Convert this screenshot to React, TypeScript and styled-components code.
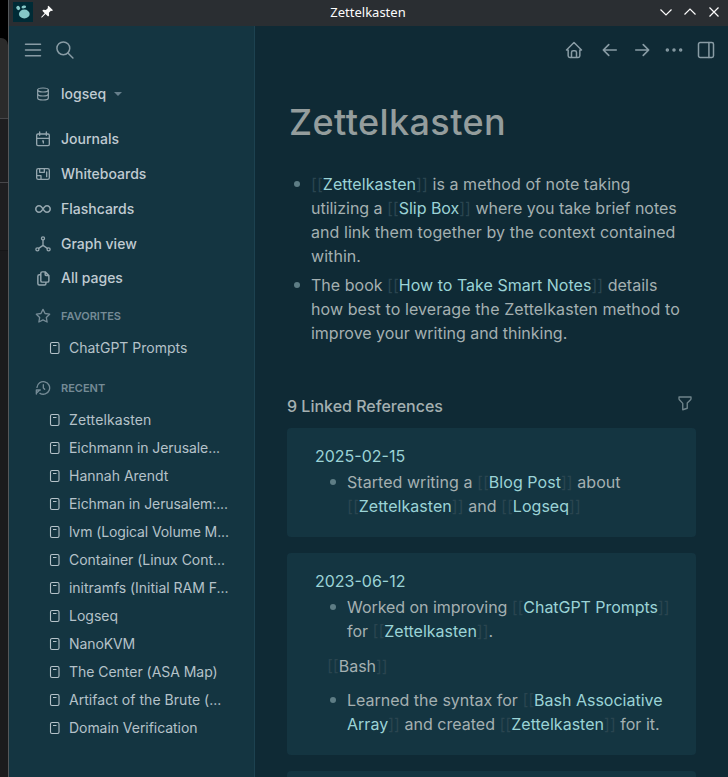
import React, { Fragment } from "react";
import styled, { createGlobalStyle, css } from "styled-components";

const GlobalStyle = createGlobalStyle`
  * { box-sizing: border-box; }
  body { margin: 0; background: #1b1b1d; overflow: hidden; }
  h1, h2, ul, p { margin: 0; padding: 0; font-weight: inherit; }
`;

const Screen = styled.div`
  display: flex;
  width: 728px;
  height: 777px;
  overflow: hidden;
  font-family: Inter, sans-serif;
`;

const Desktop = styled.div`
  display: flex;
  flex-direction: column;
  flex: none;
  width: 8px;
  background: #000;
`;

const DesktopTop = styled.div`
  height: 38px;
  background: #000;
`;

const OtherWindowBar = styled.div`
  height: 80px;
  border-top-right-radius: 7px;
  background: #2b2b2b;
`;

const OtherWindowPane = styled.div<{ $height: number; $plain?: boolean }>`
  height: ${(p) => p.$height}px;
  border-top: 1px solid #47474a;
  border-bottom: ${(p) => (p.$plain ? "1px solid #161618" : "none")};
  background: #1e1e20;
`;

const OtherWindowBody = styled.div`
  flex: 1;
  background: #1b1b1d;
`;

const Window = styled.div`
  display: flex;
  flex-direction: column;
  flex: 1;
  min-width: 0;
  border-left: 1px solid #54585b;
  background: #0f2a35;
`;

const TitleBar = styled.header`
  display: flex;
  align-items: center;
  flex: none;
  height: 26px;
  padding: 0 6px 0 4px;
  background: #2a2e32;
  color: #fcfcfc;
  svg { display: block; }
`;

const TitleSide = styled.div<{ $end?: boolean }>`
  display: flex;
  align-items: center;
  width: 120px;
  gap: ${(p) => (p.$end ? "8px" : "6px")};
  justify-content: ${(p) => (p.$end ? "flex-end" : "flex-start")};
  padding-bottom: 2px;
`;

const WindowTitle = styled.div`
  flex: 1;
  text-align: center;
  padding-left: 1px;
  font: 13px/24px "Noto Sans", sans-serif;
  padding-bottom: 3px;
`;

const Body = styled.div`
  display: flex;
  flex: 1;
  min-height: 0;
`;

const Sidebar = styled.aside`
  flex: none;
  width: 246px;
  border-right: 1px solid #1d4250;
  background: #143541;
  color: #c0cbd2;
  svg { display: block; flex: none; }
`;

const SidebarTools = styled.div`
  display: flex;
  align-items: center;
  gap: 12px;
  height: 48px;
  padding-left: 14px;
  color: #899ca5;
`;

const GraphName = styled.div`
  display: flex;
  align-items: center;
  height: 36px;
  margin-top: 1px;
  padding: 1px 0 0 26px;
  font-size: 14px;
  font-weight: 500;
  > svg:first-child { margin-right: 10px; color: #8fa1aa; }
  > svg:last-child { margin: 1px 0 0 8px; color: #667f8b; }
`;

const Nav = styled.nav`
  padding: 10px 0 3.9px;
`;

const NavItem = styled.a`
  display: flex;
  align-items: center;
  gap: 10px;
  height: 35px;
  padding-left: 26px;
  font-size: 14px;
  font-weight: 500;
  &:last-child { height: 33px; }
  svg { color: #94a6ae; }
`;

const SectionTitle = styled.h2`
  display: flex;
  align-items: center;
  gap: 10px;
  height: 36px;
  padding-left: 26px;
  color: #758b96;
  font-size: 11px;
  font-weight: 600;
`;

const PageList = styled.ul<{ $last?: boolean }>`
  list-style: none;
  padding-bottom: ${(p) => (p.$last ? "0" : "8px")};
`;

const PageItem = styled.li<{ $spacing?: number }>`
  display: flex;
  align-items: center;
  gap: 7px;
  height: 28px;
  padding-left: 39px;
  color: #b5c2c9;
  font-size: 14px;
  letter-spacing: ${(p) => p.$spacing ?? 0}px;
  white-space: nowrap;
`;

const Main = styled.main`
  flex: 1;
  min-width: 0;
  color: #a4b0b1;
  svg { display: block; flex: none; }
`;

const Toolbar = styled.div`
  display: flex;
  align-items: center;
  justify-content: flex-end;
  gap: 12px;
  height: 48px;
  padding-right: 12px;
  color: #899ca5;
  > svg:first-child { margin-right: 4px; }
`;

const Content = styled.div`
  padding: 26px 32px 0;
`;

const PageTitle = styled.h1`
  padding-left: 2px;
  font-size: 36px;
  font-weight: 500;
  line-height: 44px;
  letter-spacing: 0.4px;
  color: #949d9d;
`;

const Blocks = styled.ul`
  list-style: none;
  padding: 28px 0 0 0;
`;

const Block = styled.li<{ $inset?: boolean }>`
  display: flex;
  align-items: flex-start;
  padding-bottom: 5px;
  padding-left: ${(p) => (p.$inset ? "15px" : "7px")};
  font-size: 16px;
  line-height: 24px;
  white-space: pre;
`;

const Bullet = styled.span`
  flex: none;
  width: 6px;
  height: 6px;
  margin: 9px 11px 0 0;
  border-radius: 50%;
  background: #5e7d85;
`;

const Line = styled.div<{ $spacing: number }>`
  letter-spacing: ${(p) => p.$spacing}px;
`;

const linkColor = css`
  color: #9bd3d6;
`;

const PageLink = styled.a`
  ${linkColor}
`;

const Bracket = styled.span`
  color: #2a4550;
`;

const RefHeader = styled.div`
  display: flex;
  align-items: center;
  justify-content: space-between;
  height: 24px;
  margin-top: 44px;
  padding-right: 2px;
  font-size: 16px;
  font-weight: 500;
  svg { color: #6f848b; margin-bottom: 7px; }
`;

const RefCard = styled.section`
  min-height: 40px;
  margin-top: 10px;
  padding: 16px 28px 14px;
  border-radius: 4px;
  background: #143541;
  & + & { margin-top: 16px; }
`;

const RefDate = styled.h2`
  ${linkColor}
  font-size: 16px;
  line-height: 24px;
  padding-bottom: 2px;
`;

const Crumb = styled.p`
  padding: 6px 0 10px 12px;
  font-size: 16px;
  line-height: 24px;
`;

type IconProps = { size?: number; width?: number; children: React.ReactNode };
const Icon = ({ size = 20, width = 1.8, children }: IconProps) => (
  <svg width={size} height={size} viewBox="0 0 24 24" fill="none" stroke="currentColor"
    strokeWidth={width} strokeLinecap="round" strokeLinejoin="round">{children}</svg>
);

const AppLogo = () => (
  <svg width="20" height="20" viewBox="0 0 20 20">
    <rect width="20" height="20" fill="#002b36" />
    <g fill="#86c8c8">
      <ellipse cx="11.3" cy="12" rx="5.4" ry="4.4" />
      <ellipse cx="5.2" cy="6" rx="1.8" ry="2.2" transform="rotate(-35 5.2 6)" />
      <ellipse cx="10.8" cy="4.9" rx="2.3" ry="1.4" transform="rotate(-12 10.8 4.9)" />
    </g>
  </svg>
);

const PinIcon = () => (
  <svg width="16" height="16" viewBox="0 0 16 16" fill="#fcfcfc">
    <path d="M9.500 2 14 6.500 12.900 7.300 11.900 7 9.900 9.100 10.100 11.700 9.100 12.700 6.500 10.300 3 13.700 2.200 13.900 2.400 13.100 5.700 9.500 3.300 7 4.300 6 6.900 6.200 9 4.200 8.600 3.100Z" transform="translate(0 -.3)" />
  </svg>
);

const WindowControl = ({ d }: { d: string }) => (
  <svg width="16" height="16" viewBox="0 0 16 16" fill="none" stroke="#fcfcfc" strokeWidth="1.2"><path d={d} /></svg>
);

const PageIcon = () => (
  <svg width="14" height="14" viewBox="0 0 14 14" fill="none" stroke="currentColor">
    <rect x="2.500" y="1.500" width="8.500" height="11" rx="1.500" strokeWidth="1.1" />
    <path d="M5 4.500h3.500" />
  </svg>
);

const navItems: { label: string; icon: React.ReactNode }[] = [
  { label: "Journals", icon: <><rect x="2.500" y="4.500" width="19" height="17.500" rx="2" /><path d="M17 1.500v5M7 1.500v5M2.500 11h19M11.500 15h1v3" /></> },
  { label: "Whiteboards", icon: <><rect x="2.500" y="4" width="19" height="16" rx="2.500" /><path d="M2.500 14.500h6.500v5.500M7 4v5.500h7v-5.500M17.500 9v7" /></> },
  { label: "Flashcards", icon: <path d="M9.828 9.172a4 4 0 1 0 0 5.656 10 10 0 0 0 2.172-2.828 10 10 0 0 1 2.172-2.828 4 4 0 1 1 0 5.656 10 10 0 0 1-2.172-2.828 10 10 0 0 0-2.172-2.828" transform="translate(-2.400 -2.400) scale(1.200)" /> },
  { label: "Graph view", icon: <><circle cx="12" cy="3.500" r="2.300" /><circle cx="3.600" cy="20" r="2.300" /><circle cx="20.400" cy="20" r="2.300" /><path d="M12 6v8M5.500 18.500l6.500-4.500 6.500 4.500" /></> },
  { label: "All pages", icon: <path transform="translate(-1.200 -.5) scale(1.100)" d="M15 3v4a1 1 0 0 0 1 1h4M18 17h-7a2 2 0 0 1-2-2v-10a2 2 0 0 1 2-2h4l5 5v7a2 2 0 0 1-2 2zM16 17v2a2 2 0 0 1-2 2h-7a2 2 0 0 1-2-2v-10a2 2 0 0 1 2-2h2" /> },
];

const recents: [string, number][] = [
  ["Zettelkasten", 0.12], ["Eichmann in Jerusale...", -0.08], ["Hannah Arendt", 0], ["Eichman in Jerusalem:...", -0.08],
  ["lvm (Logical Volume M...", -0.1], ["Container (Linux Cont...", -0.02], ["initramfs (Initial RAM F...", -0.02], ["Logseq", 0],
  ["NanoKVM", -0.1], ["The Center (ASA Map)", -0.03], ["Artifact of the Brute (...", 0.04], ["Domain Verification", -0.05],
];

type TextLine = [text: string, spacing?: number];

/* Renders text in which [[name]] marks a page reference; brackets may stay open across lines. */
const Rich = ({ text }: { text: string }) => {
  let inside = text.includes("]]") && (!text.includes("[[") || text.indexOf("]]") < text.indexOf("[["));
  return (
    <>
      {text.split(/(\[\[|\]\])/).map((part, i) => {
        if (part === "[[" || part === "]]") {
          inside = part === "[[";
          return <Bracket key={i}>{part}</Bracket>;
        }
        return inside ? <PageLink key={i}>{part}</PageLink> : <Fragment key={i}>{part}</Fragment>;
      })}
    </>
  );
};

const BlockItem = ({ lines, inset }: { lines: TextLine[]; inset?: boolean }) => (
  <Block $inset={inset}>
    <Bullet />
    <div>{lines.map(([text, spacing = 0]) => <Line key={text} $spacing={spacing}><Rich text={text} /></Line>)}</div>
  </Block>
);

export default function App() {
  return (
    <Screen>
      <GlobalStyle />
      <Desktop>
        <DesktopTop />
        <OtherWindowBar />
        <OtherWindowPane $height={64} />
        <OtherWindowPane $height={69} $plain />
        <OtherWindowBody />
      </Desktop>
      <Window>
        <TitleBar>
          <TitleSide><AppLogo /><PinIcon /></TitleSide>
          <WindowTitle>Zettelkasten</WindowTitle>
          <TitleSide $end>
            <WindowControl d="M2.500 5.500 8 11l5.500-5.500" />
            <WindowControl d="M2.500 10.500 8 5l5.500 5.500" />
            <WindowControl d="M3.500 3.500l9 9M12.500 3.500l-9 9" />
          </TitleSide>
        </TitleBar>
        <Body>
          <Sidebar>
            <SidebarTools>
              <Icon><path d="M3 5h18M3 12h18M3 19h18" /></Icon>
              <Icon><circle cx="10" cy="10" r="7.700" /><path d="M21.500 21.500l-6-6" /></Icon>
            </SidebarTools>
            <GraphName>
              <Icon size={16}><ellipse cx="12" cy="6" rx="8" ry="3" /><path d="M4 6v6c0 1.657 3.582 3 8 3s8-1.343 8-3V6" /><path d="M4 12v6c0 1.657 3.582 3 8 3s8-1.343 8-3v-6" /></Icon>
              logseq
              <svg width="8" height="4" viewBox="0 0 8 4" fill="currentColor"><path d="M0 0h8L4 4z" /></svg>
            </GraphName>
            <Nav>
              {navItems.map((n) => <NavItem key={n.label}><Icon size={16} width={2}>{n.icon}</Icon>{n.label}</NavItem>)}
            </Nav>
            <SectionTitle><Icon size={16} width={2}><path d="M12 17.750l-6.172 3.245 1.179-6.873-5-4.867 6.900-1 3.086-6.253 3.086 6.253 6.900 1-5 4.867 1.179 6.873z" /></Icon>FAVORITES</SectionTitle>
            <PageList><PageItem><PageIcon />ChatGPT Prompts</PageItem></PageList>
            <SectionTitle><Icon size={16} width={2}><path d="M12.500 7v5l2 2M3 11a9.500 9.500 0 1 1 4.500 9M2 21v-6h6M2 20l5-5" /></Icon>RECENT</SectionTitle>
            <PageList $last>
              {recents.map(([name, spacing]) => <PageItem key={name} $spacing={spacing}><PageIcon />{name}</PageItem>)}
            </PageList>
          </Sidebar>
          <Main>
            <Toolbar>
              <Icon><path d="M5 12H3l9-9 9 9h-2M5 12v7a2 2 0 0 0 2 2h10a2 2 0 0 0 2-2v-7M9 21v-6a2 2 0 0 1 2-2h2a2 2 0 0 1 2 2v6" /></Icon>
              <Icon width={2}><path d="M4 12h15.500M4 12l6.500 6.500M4 12l6.500-6.500" /></Icon>
              <Icon width={2}><path d="M4.500 12h15.500M13.500 18.500l6.500-6.500M13.500 5.500l6.500 6.500" /></Icon>
              <Icon><circle cx="4" cy="12" r="1.200" /><circle cx="12" cy="12" r="1.200" /><circle cx="20" cy="12" r="1.200" /></Icon>
              <Icon><rect x="3" y="3" width="18" height="18" rx="2" /><path d="M15.500 3v18" /></Icon>
            </Toolbar>
            <Content>
              <PageTitle>Zettelkasten</PageTitle>
              <Blocks>
                <BlockItem lines={[["[[Zettelkasten]] is a method of note taking", 0.06], ["utilizing a [[Slip Box]] where you take brief notes", -0.02], ["and link them together by the context contained", 0.06], ["within.", 0.06]]} />
                <BlockItem lines={[["The book [[How to Take Smart Notes]] details", 0.02], ["how best to leverage the Zettelkasten method to", 0.09], ["improve your writing and thinking.", -0.02]]} />
              </Blocks>
              <RefHeader>9 Linked References<Icon size={18}><path d="M4 4h16v2.172a2 2 0 0 1-.586 1.414L15 12v7l-6 2v-8.500L4.520 7.572A2 2 0 0 1 4 6.227z" /></Icon></RefHeader>
              <RefCard>
                <RefDate>2025-02-15</RefDate>
                <BlockItem inset lines={[["Started writing a [[Blog Post]] about", 0.05], ["[[Zettelkasten]] and [[Logseq]]", 0.04]]} />
              </RefCard>
              <RefCard>
                <RefDate>2023-06-12</RefDate>
                <BlockItem inset lines={[["Worked on improving [[ChatGPT Prompts]]", -0.05], ["for [[Zettelkasten]]."]]} />
                <Crumb><Bracket>[[</Bracket>Bash<Bracket>]]</Bracket></Crumb>
                <BlockItem inset lines={[["Learned the syntax for [[Bash Associative"], ["Array]] and created [[Zettelkasten]] for it.", 0.02]]} />
              </RefCard>
              <RefCard />
            </Content>
          </Main>
        </Body>
      </Window>
    </Screen>
  );
}
